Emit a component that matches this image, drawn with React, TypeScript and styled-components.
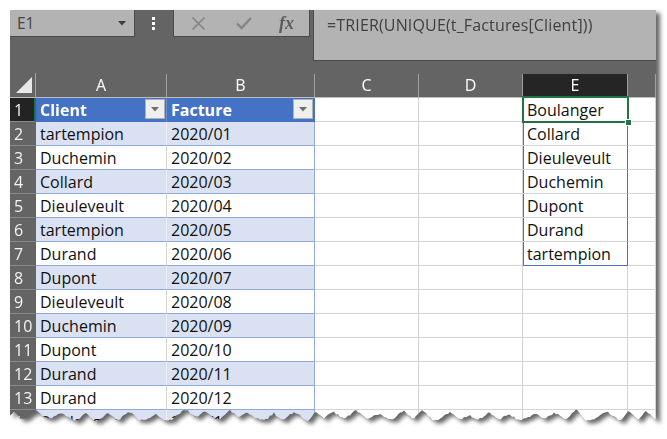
import styled, { createGlobalStyle } from "styled-components";

const GlobalStyle = createGlobalStyle`
  body {
    margin: 0;
    background: #ffffff;
    font-family: "Open Sans", "Noto Sans", sans-serif;
  }
`;

type col = { key: string; width: number };

const columns: col[] = [
  { key: "A", width: 131 },
  { key: "B", width: 148 },
  { key: "C", width: 104 },
  { key: "D", width: 104 },
  { key: "E", width: 105 },
];

const factures = [
  ["tartempion", "2020/01"],
  ["Duchemin", "2020/02"],
  ["Collard", "2020/03"],
  ["Dieuleveult", "2020/04"],
  ["tartempion", "2020/05"],
  ["Durand", "2020/06"],
  ["Dupont", "2020/07"],
  ["Dieuleveult", "2020/08"],
  ["Duchemin", "2020/09"],
  ["Dupont", "2020/10"],
  ["Durand", "2020/11"],
  ["Durand", "2020/12"],
  ["Boulanger", "2020/13"],
];

const uniques = [
  "Boulanger",
  "Collard",
  "Dieuleveult",
  "Duchemin",
  "Dupont",
  "Durand",
  "tartempion",
];

const rand = (i: number) => Math.abs(Math.sin(i * 12.9898 + 4.1) * 43758.5453) % 1;

// bottom edge of the torn paper: irregular peaks with small teeth
const tornEdge = (w: number, base: number) => {
  const peaks: { x: number; h: number; half: number }[] = [];
  let px = 4;
  let k = 0;
  while (px < w + 30) {
    peaks.push({ x: px, h: 5 + rand(k) * 6, half: 8 + rand(k + 50) * 6 });
    px += 16 + rand(k + 100) * 14;
    k++;
  }
  const edge: string[] = [];
  for (let x = 0, i = 0; x <= w; x += 2, i++) {
    let lift = 0;
    peaks.forEach((p) => {
      const d = Math.abs(x - p.x);
      if (d < p.half) lift = Math.max(lift, p.h * (1 - d / p.half));
    });
    const y = base + 12 - lift - rand(i + 300) * 2.2;
    edge.push(`${x}px ${y.toFixed(1)}px`);
  }
  edge.push(`${w}px ${base + 11}px`);
  return `polygon(0px 0px, ${w}px 0px, ${edge.reverse().join(", ")})`;
};

const Page = styled.div`
  padding: 10px 0 0 10px;
`;

const Shadow = styled.div`
  width: 646px;
  filter: drop-shadow(4px 3px 2px rgba(0, 0, 0, 0.6));
`;

const Sheet = styled.div<{ $clip: string }>`
  background: #646464;
  height: 424px;
  overflow: hidden;
  clip-path: ${(p) => p.$clip};
  font-size: 16px;
`;

const TopBar = styled.div`
  display: flex;
  align-items: flex-start;
  height: 63px;
`;

const NameBox = styled.div`
  box-sizing: border-box;
  width: 125px;
  height: 27px;
  display: flex;
  align-items: center;
  justify-content: space-between;
  padding: 0 8px 0 7px;
  background: #b3b3b3;
  border-bottom: 1px solid #4a4a4a;
  border-right: 1px solid #4a4a4a;
  color: #454545;
  font-size: 15.5px;
`;

const Grip = styled.div`
  width: 38px;
  height: 27px;
  display: flex;
  align-items: center;
  justify-content: center;
`;

const FxButtons = styled.div`
  box-sizing: border-box;
  width: 137px;
  height: 27px;
  display: flex;
  align-items: center;
  gap: 30px;
  padding-left: 17px;
  background: #b3b3b3;
  border-bottom: 1px solid #4a4a4a;
  border-right: 1px solid #4a4a4a;
  border-left: 1px solid #4a4a4a;
`;

const Fx = styled.span`
  font-family: "Liberation Serif", serif;
  font-style: italic;
  font-weight: bold;
  font-size: 18px;
  color: #5c5c5c;
  margin-left: -3px;
`;

const FormulaInput = styled.div`
  box-sizing: border-box;
  flex: 1;
  margin-left: 3px;
  height: 51px;
  padding: 4px 0 0 13px;
  background: #b3b3b3;
  border-left: 1px solid #4a4a4a;
  border-bottom: 1px solid #4a4a4a;
  color: #3f3f3f;
  font-size: 16px;
  letter-spacing: 0.15px;
`;

const Row = styled.div<{ $h: number }>`
  display: flex;
  height: ${(p) => p.$h}px;
`;

const Corner = styled.div`
  box-sizing: border-box;
  width: 26px;
  flex: none;
  display: flex;
  align-items: flex-end;
  justify-content: flex-end;
  padding: 0 3px 4px 0;
  border-right: 1px solid #a0a0a0;
  border-bottom: 1px solid #bdbdbd;
`;

const ColHead = styled.div<{ $w?: number; $sel?: boolean }>`
  box-sizing: border-box;
  width: ${(p) => (p.$w ? `${p.$w}px` : "auto")};
  flex: ${(p) => (p.$w ? "none" : "1")};
  margin-top: 1px;
  line-height: 23px;
  text-align: center;
  color: #ffffff;
  background: ${(p) => (p.$sel ? "#252525" : "transparent")};
  border-right: 1px solid #a0a0a0;
  border-bottom: 1px solid ${(p) => (p.$sel ? "#252525" : "#bdbdbd")};
`;

const RowHead = styled.div<{ $sel?: boolean }>`
  box-sizing: border-box;
  width: 26px;
  flex: none;
  padding: 1px 0 0 4px;
  line-height: 23px;
  color: #f4f4f4;
  background: ${(p) => (p.$sel ? "#232323" : "#646464")};
  border-bottom: 1px solid #8a8a8a;
  border-right: 2px solid ${(p) => (p.$sel ? "#217346" : "#646464")};
`;

const Cell = styled.div<{
  $w?: number;
  $bg?: string;
  $right?: string;
  $bottom?: string;
  $left?: string;
  $head?: boolean;
}>`
  position: relative;
  box-sizing: border-box;
  width: ${(p) => (p.$w ? `${p.$w}px` : "auto")};
  flex: ${(p) => (p.$w ? "none" : "1")};
  display: flex;
  align-items: flex-start;
  padding: 1px 0 0 4px;
  line-height: 22px;
  white-space: nowrap;
  color: ${(p) => (p.$head ? "#ffffff" : "#111111")};
  font-weight: ${(p) => (p.$head ? 700 : 400)};
  background: ${(p) => p.$bg ?? "#ffffff"};
  border-right: 1px solid ${(p) => p.$right ?? "#d4d4d4"};
  border-bottom: 1px solid ${(p) => p.$bottom ?? "#d4d4d4"};
  box-shadow: ${(p) => (p.$left ? `inset 1px 0 0 ${p.$left}` : "none")};
`;

const FilterButton = styled.div`
  box-sizing: border-box;
  margin: 0 1px 0 auto;
  width: 20px;
  height: 20px;
  display: flex;
  align-items: center;
  justify-content: center;
  background: #efefef;
  border: 1px solid #b0b0b0;
`;

const Selection = styled.div`
  position: absolute;
  z-index: 5;
  top: -2px;
  left: -1px;
  right: -2px;
  bottom: -2px;
  border: 2px solid #217346;
  pointer-events: none;
`;

const FillHandle = styled.div`
  position: absolute;
  right: -5px;
  bottom: -5px;
  width: 5px;
  height: 5px;
  background: #217346;
  border: 1px solid #ffffff;
`;

const Caret = ({ color }: { color: string }) => (
  <svg width="8" height="5" viewBox="0 0 8 5">
    <path d="M0 0h8L4 4.5z" fill={color} />
  </svg>
);

const TABLE_BLUE = "#4472c4";
const BAND = "#d9e1f2";
const TABLE_LINE = "#8ea9db";

export default function App() {
  const rows = factures.length + 1;

  return (
    <Page>
      <GlobalStyle />
      <Shadow>
        <Sheet $clip={tornEdge(646, 399)}>
          <TopBar>
            <NameBox>
              <span>E1</span>
              <Caret color="#3c3c3c" />
            </NameBox>
            <Grip>
              <svg width="4" height="14" viewBox="0 0 4 14">
                <rect x="0" y="0" width="3" height="3" fill="#fff" />
                <rect x="0" y="5" width="3" height="3" fill="#fff" />
                <rect x="0" y="10" width="3" height="3" fill="#fff" />
              </svg>
            </Grip>
            <FxButtons>
              <svg width="15" height="15" viewBox="0 0 15 15">
                <path
                  d="M1.5 1.5l12 12M13.5 1.5l-12 12"
                  stroke="#848484"
                  strokeWidth="1.6"
                  fill="none"
                />
              </svg>
              <svg width="16" height="14" viewBox="0 0 16 14">
                <path
                  d="M1 7.5l4.5 4.5L15 2"
                  stroke="#848484"
                  strokeWidth="2.4"
                  fill="none"
                />
              </svg>
              <Fx>fx</Fx>
            </FxButtons>
            <FormulaInput>=TRIER(UNIQUE(t_Factures[Client]))</FormulaInput>
          </TopBar>

          <Row $h={25}>
            <Corner>
              <svg width="16" height="16" viewBox="0 0 16 16">
                <path d="M16 0V16H0z" fill="#e8e8e8" />
              </svg>
            </Corner>
            {columns.map((c) => (
              <ColHead key={c.key} $w={c.width} $sel={c.key === "E"}>
                {c.key}
              </ColHead>
            ))}
            <ColHead />
          </Row>

          {Array.from({ length: rows }, (_, i) => {
            const n = i + 1;
            const isHead = n === 1;
            const band = n % 2 === 0;
            const tableBg = isHead ? TABLE_BLUE : band ? BAND : "#ffffff";
            const a = isHead ? "Client" : factures[i - 1][0];
            const b = isHead ? "Facture" : factures[i - 1][1];
            const spill = n <= uniques.length;
            return (
              <Row $h={24} key={n}>
                <RowHead $sel={isHead}>{n}</RowHead>
                <Cell
                  $w={columns[0].width}
                  $bg={tableBg}
                  $bottom={isHead ? TABLE_BLUE : TABLE_LINE}
                  $right={isHead ? "#6d8fd0" : band ? "#eef1f8" : "#d4d4d4"}
                  $head={isHead}
                >
                  {a}
                  {isHead && (
                    <FilterButton>
                      <Caret color="#6e6e6e" />
                    </FilterButton>
                  )}
                </Cell>
                <Cell
                  $w={columns[1].width}
                  $bg={tableBg}
                  $bottom={isHead ? TABLE_BLUE : TABLE_LINE}
                  $right={isHead ? TABLE_BLUE : TABLE_LINE}
                  $head={isHead}
                >
                  {b}
                  {isHead && (
                    <FilterButton>
                      <Caret color="#6e6e6e" />
                    </FilterButton>
                  )}
                </Cell>
                <Cell $w={columns[2].width} />
                <Cell $w={columns[3].width} />
                <Cell
                  $w={columns[4].width}
                  $left={spill ? TABLE_BLUE : undefined}
                  $right={spill ? TABLE_BLUE : undefined}
                  $bottom={n === uniques.length ? TABLE_BLUE : undefined}
                >
                  {spill ? uniques[i] : ""}
                  {isHead && (
                    <Selection>
                      <FillHandle />
                    </Selection>
                  )}
                </Cell>
                <Cell />
              </Row>
            );
          })}
        </Sheet>
      </Shadow>
    </Page>
  );
}
